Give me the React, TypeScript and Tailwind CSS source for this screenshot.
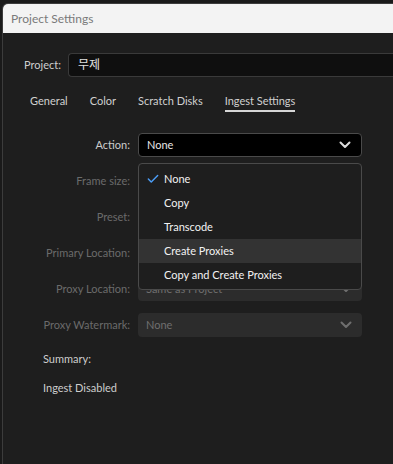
import { Check } from 'lucide-react'

const font = { fontFamily: 'Lato, "Noto Sans CJK KR", sans-serif' }

function Chevron({ className }: { className: string }) {
  return (
    <svg width="12" height="8" viewBox="0 0 12 8" className={className}>
      <polyline points="1.5,1.5 6,6 10.5,1.5" fill="none" stroke="currentColor" strokeWidth="2" strokeLinecap="round" strokeLinejoin="round" />
    </svg>
  )
}

function Row({ label, value, disabled = true }: { label: string; value: string; disabled?: boolean }) {
  return (
    <div className="flex items-center h-6">
      <div className={`w-[87px] flex justify-end whitespace-nowrap ${disabled ? 'text-[#6b6b6b]' : 'text-[#cdcdcd]'}`}>
        {label}
      </div>
      <div
        className={`ml-2 w-[224px] h-6 rounded-[4px] flex items-center justify-between pl-2 pr-2.5 ${
          disabled ? 'bg-[#2c2c2c] text-[#6f6f6f]' : 'bg-black border border-[#4a4a4a] text-[#e6e6e6]'
        }`}
      >
        <span>{value}</span>
        <Chevron className={disabled ? 'text-[#6f6f6f]' : 'text-[#dcdcdc]'} />
      </div>
    </div>
  )
}

const items = ['None', 'Copy', 'Transcode', 'Create Proxies', 'Copy and Create Proxies']

export default function App() {
  return (
    <div className="w-[393px] h-[464px] bg-[#1a1a1a] pt-[3px] pl-[2px] overflow-hidden text-[11px] leading-4" style={font}>
      <div className="h-full flex flex-col border-l border-t border-[#3c3c3c] rounded-tl-[6px] overflow-hidden bg-[#1e1e1e]">
        {/* Title bar */}
        <div className="h-[29px] bg-[#f3f3f3] flex items-center pl-[8px] text-[12px] text-[#7a7a7a] shrink-0">
          Project Settings
        </div>

        {/* Project row */}
        <div className="flex items-center mt-[20px] pl-[21px]">
          <span className="text-[#cfcfcf]">Project:</span>
          <div className="ml-[7px] flex-1 h-6 bg-[#0f0f0f] border border-[#3a3a3a] border-r-0 rounded-l-[4px] flex items-center pl-[9px] text-[12px] text-[#e0e0e0]">
            무제
          </div>
        </div>

        {/* Tabs */}
        <div className="flex items-start gap-[22px] mt-[16px] pl-[27px] text-[#d0d0d0]">
          <span>General</span>
          <span>Color</span>
          <span>Scratch Disks</span>
          <div className="flex flex-col">
            <span>Ingest Settings</span>
            <div className="h-[2px] bg-[#d6d6d6] mt-[1px]" />
          </div>
        </div>

        {/* Form */}
        <div className="flex flex-col gap-3 mt-[21px] pl-[40px]">
          <div className="relative">
            <Row label="Action:" value="None" disabled={false} />
            <div className="absolute left-[95px] top-[30px] w-[224px] z-10 bg-[#1e1e1e] border border-[#4a4a4a] rounded-[4px] pt-[3px] pb-[2px]">
              {items.map((it, i) => (
                <div
                  key={it}
                  className={`h-6 flex items-center text-[#f2f2f2] ${it === 'Create Proxies' ? 'bg-[#333333]' : ''}`}
                >
                  <span className="w-[25px] flex justify-end pr-[4px]">
                    {i === 0 && <Check size={14} strokeWidth={2.5} className="text-[#4b9cf5]" />}
                  </span>
                  <span>{it}</span>
                </div>
              ))}
            </div>
          </div>
          <Row label="Frame size:" value="" />
          <Row label="Preset:" value="" />
          <Row label="Primary Location:" value="" />
          <Row label="Proxy Location:" value="Same as Project" />
          <Row label="Proxy Watermark:" value="None" />
        </div>

        <div className="mt-[14px] pl-[40px] text-[#cdcdcd]">Summary:</div>
        <div className="mt-[13px] pl-[40px] text-[#cdcdcd]">Ingest Disabled</div>
      </div>
    </div>
  )
}
